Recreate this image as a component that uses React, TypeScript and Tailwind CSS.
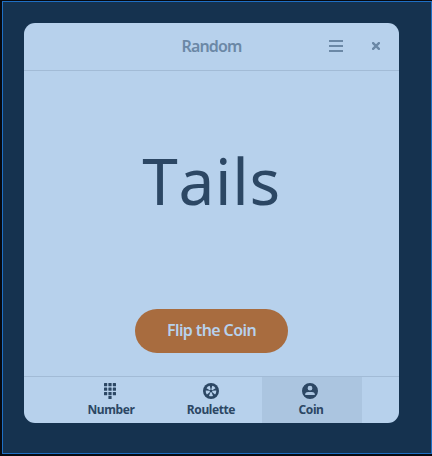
import type { ReactNode } from 'react';

const NumberIcon = () => (
  <svg width="16" height="16" viewBox="0 0 16 16" fill="currentColor">
    {[0, 4.5, 9].map((y) =>
      [1, 5.4, 9.8].map((x) => <rect key={`${x}-${y}`} x={x} y={y} width="3.2" height="3.2" rx="0.5" />),
    )}
    <rect x="5.4" y="13" width="3.2" height="3" rx="0.5" />
  </svg>
);

const RouletteIcon = () => (
  <svg width="16" height="16" viewBox="0 0 16 16" fill="currentColor">
    <circle cx="8" cy="8" r="8" />
    <g className="fill-[#b7d1ec]">
      {[0, 72, 144, 216, 288].map((angle) => (
        <path key={angle} d="M7.400 9.300 6 12.900Q8 13.800 10 12.900L8.600 9.300Z" transform={`rotate(${angle} 8 8)`} />
      ))}
    </g>
  </svg>
);

const CoinIcon = () => (
  <svg className="mr-0.5" width="16" height="16" viewBox="0 0 16 16" fill="currentColor">
    <path
      fillRule="evenodd"
      d="M8 0a8 8 0 1 1 0 16A8 8 0 0 1 8 0ZM8 2.8a2.4 2.4 0 1 0 0 4.8a2.4 2.4 0 0 0 0-4.8ZM3.2 12h9.6v-.8C12.8 9.7 11.3 9 10 9H6c-1.300 0-2.800.7-2.800 2.200Z"
    />
  </svg>
);

function Tab({ icon, active, children }: { icon: ReactNode; active?: boolean; children: ReactNode }) {
  return (
    <button className={`flex w-[100px] flex-col items-center pt-1.5 pr-[2px] ${active ? 'bg-[#abc5e0]' : ''}`}>
      {icon}
      <span className="mt-[3px] text-[12px] leading-4 font-bold tracking-[-0.4px]">{children}</span>
    </button>
  );
}

export default function App() {
  return (
    <div className="h-[456px] w-[432px] bg-[#07090f] pt-px pl-[2px] font-['Noto_Sans',sans-serif] text-[#2c4764]">
      <div className="h-[453px] w-[430px] border border-[#1e6fc4] bg-[#15324f] pt-[21px] pl-[21px]">
        <main className="flex h-[400px] w-[375px] flex-col overflow-hidden rounded-[11px] bg-[#b7d1ec]">
          <header className="flex h-12 shrink-0 items-center border-b border-[#a2bbd6] pb-px text-[#6b88a6]">
            <h1 className="-mt-px ml-[137px] w-[101px] text-center text-[16px] leading-none font-semibold tracking-[-0.850px]">Random</h1>
            <svg className="ml-[67px]" width="14" height="12" viewBox="0 0 14 12" fill="currentColor">
              <path d="M0 0h14v2H0zM0 5h14v2H0zM0 10h14v2H0z" />
            </svg>
            <svg className="ml-[29px]" width="8" height="8" viewBox="0 0 8 8" stroke="currentColor" strokeWidth="2.4">
              <path d="m.3.3 7.400 7.400m0-7.400-7.400 7.400" />
            </svg>
          </header>
          <section className="flex grow flex-col items-center">
            <p className="mt-[78px] h-16 text-[64px] leading-[64px] tracking-[0.7px] [font-kerning:none]">Tails</p>
            <button className="mt-24 h-11 w-[153px] rounded-full bg-[#a86c3f] pb-0.5 text-[16px] font-semibold tracking-[-0.6px] text-[#b7d1ec]">
              Flip the Coin
            </button>
          </section>
          <nav className="flex h-[47px] shrink-0 border-t border-[#a2bbd6] pl-[38px]">
            <Tab icon={<NumberIcon />}>Number</Tab>
            <Tab icon={<RouletteIcon />}>Roulette</Tab>
            <Tab icon={<CoinIcon />} active>Coin</Tab>
          </nav>
        </main>
      </div>
    </div>
  );
}
